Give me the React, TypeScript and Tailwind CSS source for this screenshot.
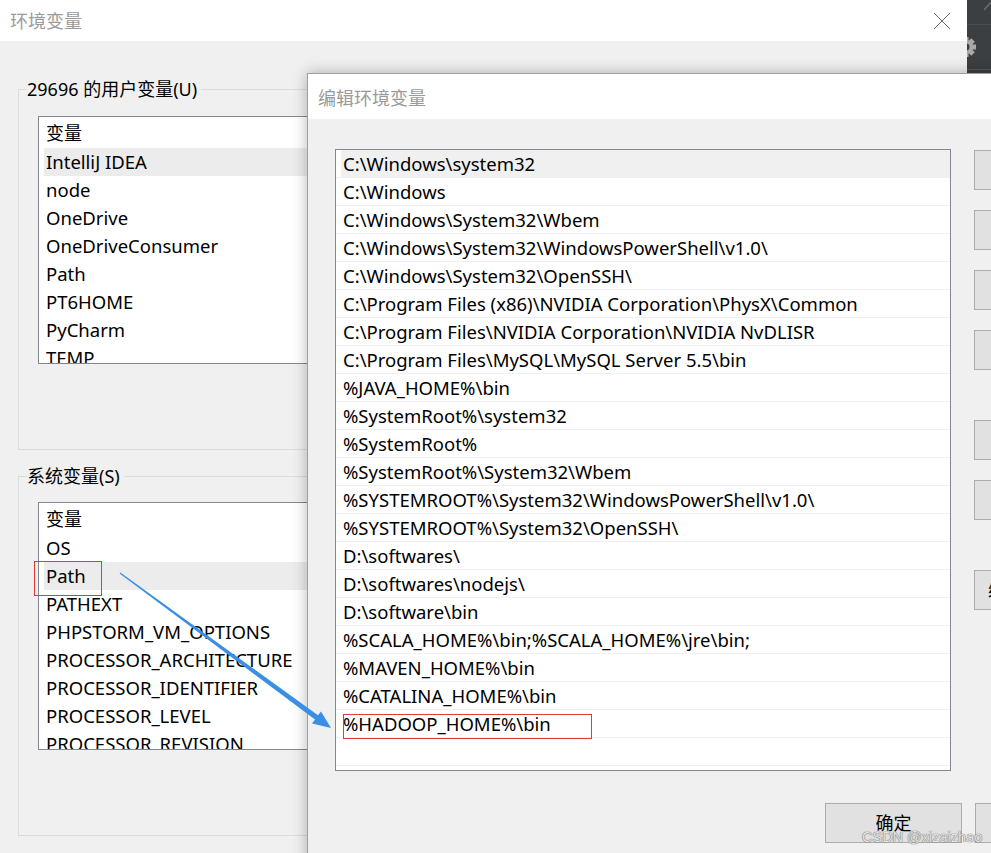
import React from "react";

const F = "font-['Noto_Sans','Noto_Sans_CJK_SC',sans-serif]";

const userVars = ["IntelliJ IDEA", "node", "OneDrive", "OneDriveConsumer", "Path", "PT6HOME", "PyCharm", "TEMP"];
const sysVars = ["OS", "Path", "PATHEXT", "PHPSTORM_VM_OPTIONS", "PROCESSOR_ARCHITECTURE", "PROCESSOR_IDENTIFIER", "PROCESSOR_LEVEL", "PROCESSOR_REVISION"];
const paths = [
  "C:\\Windows\\system32",
  "C:\\Windows",
  "C:\\Windows\\System32\\Wbem",
  "C:\\Windows\\System32\\WindowsPowerShell\\v1.0\\",
  "C:\\Windows\\System32\\OpenSSH\\",
  "C:\\Program Files (x86)\\NVIDIA Corporation\\PhysX\\Common",
  "C:\\Program Files\\NVIDIA Corporation\\NVIDIA NvDLISR",
  "C:\\Program Files\\MySQL\\MySQL Server 5.5\\bin",
  "%JAVA_HOME%\\bin",
  "%SystemRoot%\\system32",
  "%SystemRoot%",
  "%SystemRoot%\\System32\\Wbem",
  "%SYSTEMROOT%\\System32\\WindowsPowerShell\\v1.0\\",
  "%SYSTEMROOT%\\System32\\OpenSSH\\",
  "D:\\softwares\\",
  "D:\\softwares\\nodejs\\",
  "D:\\software\\bin",
  "%SCALA_HOME%\\bin;%SCALA_HOME%\\jre\\bin;",
  "%MAVEN_HOME%\\bin",
  "%CATALINA_HOME%\\bin",
  "%HADOOP_HOME%\\bin",
  "",
];

function VarList({ items, selected }: { items: string[]; selected: number }) {
  return (
    <div className="ml-[11px] mt-[15px] h-[248px] w-[600px] shrink-0 overflow-hidden border border-[#828790] bg-white">
      <div className="flex h-[31px] items-center pl-[7px] text-[18px] leading-none text-black">变量</div>
      {items.map((t, i) => (
        <div
          key={t}
          className={`ml-[5px] flex h-[28px] items-center whitespace-nowrap pl-[2px] text-[18.5px] leading-none text-black ${i === selected ? "bg-[#ececec]" : ""}`}
        >
          {t}
        </div>
      ))}
    </div>
  );
}

function Btn({ className, children }: { className: string; children?: React.ReactNode }) {
  return (
    <div className={`flex h-[40px] shrink-0 items-center border border-[#adadad] bg-[#e1e1e1] text-[18px] text-black ${className}`}>
      {children}
    </div>
  );
}

export default function App() {
  return (
    <div className={`relative h-[853px] w-[991px] overflow-hidden bg-[#f0f0f0] ${F}`}>
      {/* Back dialog */}
      <div className="absolute left-0 top-0 flex h-[853px] w-[967px] flex-col bg-[#f0f0f0]">
        <div className="flex h-[41px] shrink-0 items-center justify-between bg-white pl-[10px] pr-[16px]">
          <span className="text-[18px] leading-none text-[#9a9a9a]">环境变量</span>
          <svg width="18" height="18" viewBox="0 0 18 18">
            <path d="M1 1L17 17M17 1L1 17" stroke="#6b6b6b" strokeWidth="1" />
          </svg>
        </div>
        <div className="flex flex-col pl-[18px] pt-[36px]">
          <fieldset className="h-[373px] w-[930px] border border-[#dcdcdc] pl-[8px]">
            <legend className="h-[24px] pr-[4px] text-[18px] leading-[24px] text-black">29696 的用户变量(U)</legend>
            <VarList items={userVars} selected={0} />
          </fieldset>
          <fieldset className="mt-[14px] h-[372px] w-[930px] border border-[#dcdcdc] pl-[8px]">
            <legend className="h-[24px] pr-[4px] text-[18px] leading-[24px] text-black">系统变量(S)</legend>
            <div className="-mt-[1px]">
              <VarList items={sysVars} selected={1} />
            </div>
          </fieldset>
        </div>
      </div>

      {/* Dark strip of the IDE behind */}
      <div className="absolute right-0 top-0 h-[74px] w-[24px] overflow-hidden bg-[#3c3f41]">
        <div className="mt-[24px] h-px bg-[#4c4f52]" />
        <svg className="absolute left-0 top-[37px]" width="24" height="22" viewBox="0 0 24 22">
          <g transform="translate(-1 10)">
            <circle r="7" fill="#a9a9a9" />
            <rect x="-2.5" y="-10" width="5" height="20" fill="#a9a9a9" />
            <rect x="-10" y="-2.5" width="20" height="5" fill="#a9a9a9" />
            <rect x="-2.5" y="-10" width="5" height="20" fill="#a9a9a9" transform="rotate(45)" />
            <rect x="-2.5" y="-10" width="5" height="20" fill="#a9a9a9" transform="rotate(-45)" />
            <circle r="3.5" fill="#3c3f41" />
          </g>
        </svg>
        <div className="absolute left-0 top-[69px] h-px w-full bg-[#55585b]" />
        <svg className="absolute left-0 top-0" width="24" height="20" viewBox="0 0 24 20">
          <path d="M17 10L24 2" stroke="#6a6d70" strokeWidth="1.5" />
        </svg>
      </div>

      {/* Front dialog */}
      <div className="absolute left-[307px] top-[73px] h-[800px] w-[820px] border border-[#a0a0a0] bg-[#f0f0f0] shadow-[0_0_14px_rgba(0,0,0,0.28)]">
        <div className="flex h-[45px] items-center bg-white pl-[10px] pt-[3px]">
          <span className="text-[18px] leading-none text-[#9a9a9a]">编辑环境变量</span>
        </div>
        <div className="flex pl-[27px] pt-[30px]">
          <div className="h-[622px] w-[616px] shrink-0 border border-[#828790] bg-white">
            {paths.map((p, i) => (
              <div key={i} className="h-[28px] border-b border-[#f0f0f0]">
                <div
                  className={`ml-[5px] flex h-full items-center whitespace-nowrap pl-[2px] pt-[2px] text-[18.5px] leading-none text-black ${i === 0 ? "bg-[#f0f0f0]" : ""}`}
                >
                  {p}
                </div>
              </div>
            ))}
          </div>
          <div className="ml-[23px] flex w-[140px] shrink-0 flex-col pt-[1px]">
            <Btn className="">{""}</Btn>
            <Btn className="mt-[20px]">{""}</Btn>
            <Btn className="mt-[20px]">{""}</Btn>
            <Btn className="mt-[20px]">{""}</Btn>
            <Btn className="mt-[50px]">{""}</Btn>
            <Btn className="mt-[20px]">{""}</Btn>
            <Btn className="mt-[50px] whitespace-nowrap pl-[13px]">编辑文本(T)...</Btn>
          </div>
        </div>
        <div className="flex pl-[517px] pt-[32px]">
          <div className="flex h-[40px] w-[137px] shrink-0 items-center justify-center border border-[#adadad] bg-[#e1e1e1] text-[18px] leading-none text-black">
            确定
          </div>
          <div className="ml-[13px] h-[40px] w-[137px] shrink-0 border border-[#adadad] bg-[#e1e1e1]" />
        </div>
      </div>

      {/* Annotations */}
      <svg className="pointer-events-none absolute left-0 top-0" width="991" height="853" viewBox="0 0 991 853">
        <rect x="34.5" y="561.5" width="67" height="34" fill="none" stroke="#e53935" strokeWidth="1" />
        <rect x="343.5" y="714.5" width="248" height="24" fill="none" stroke="#e53935" strokeWidth="1" />
        <polygon
          points="119.6,573.5 315,719.6 312,723.6 331,728 321,711.4 318,715.2 120.4,572.5"
          fill="#3a8fe4"
        />
      </svg>

      {/* Watermark */}
      <div className="absolute left-[862px] top-[829px] whitespace-nowrap font-['Liberation_Sans',sans-serif] text-[14.5px] leading-[16px] text-[#e4e4e4] [text-shadow:0_0_1px_#666,0_0_1px_#666]">
        CSDN @xizaizhao
      </div>
    </div>
  );
}
